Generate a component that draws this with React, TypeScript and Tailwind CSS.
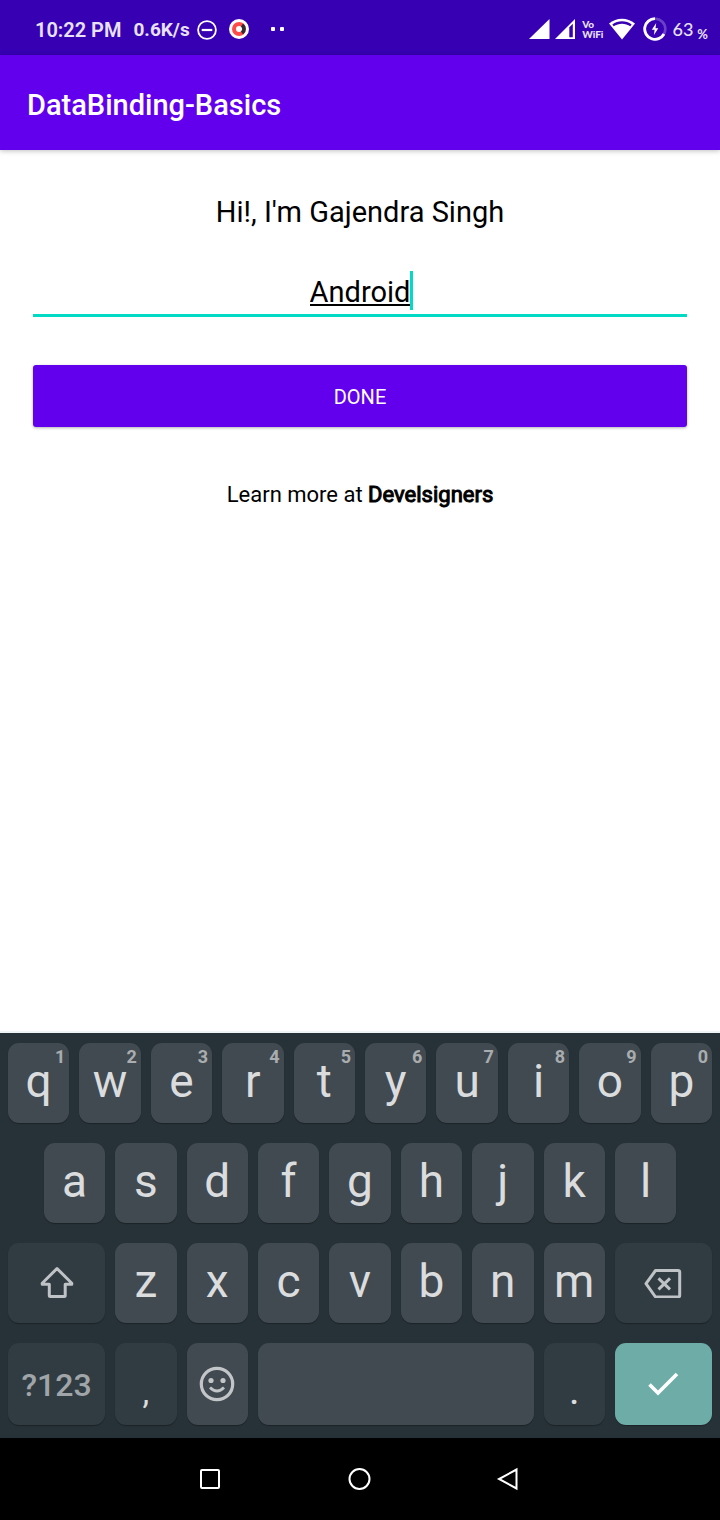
import { useState } from "react";
import type { ReactNode } from "react";

const sans = "font-['Roboto','Noto_Sans',sans-serif]";

function StatusBar() {
  return (
    <header className="flex h-[55px] items-center justify-between bg-[#3700b3] pt-1 pr-3 pl-[35px] text-[#e9e2f7]">
      <div className="flex items-center">
        <span className="text-[20px] leading-6 font-semibold">10:22 PM</span>
        <span className="ml-3 text-[19px] leading-6 font-bold">0.6K/s</span>
        <svg className="ml-[7px] size-5" viewBox="0 0 20 20" fill="none" stroke="#fff" strokeWidth="1.8">
          <circle cx="10" cy="10" r="8.9" />
          <path d="M4.7 10h10.6" strokeWidth="2.2" />
        </svg>
        <svg className="mb-[2px] ml-3 size-5" viewBox="0 0 20 20">
          <circle cx="10" cy="10" r="10" fill="#fff" />
          <circle cx="10" cy="10" r="5" fill="none" stroke="#ff4a4a" strokeWidth="4" />
          <path d="M13 6A5 5 0 0 1 13 14" fill="none" stroke="#2d2d35" strokeWidth="3.6" />
        </svg>
        <svg className="mb-[2px] ml-[21px] h-5 w-4" viewBox="0 0 16 20" fill="#fff">
          <rect x="1" y="8" width="4" height="4" rx="1" />
          <rect x="10" y="8" width="4" height="4" rx="1" />
        </svg>
      </div>
      <div className="flex items-center pb-[2px]">
        <svg className="h-5 w-[21px]" viewBox="0 0 21 20" fill="#fff">
          <path d="M0 20 20.500 0V20z" />
        </svg>
        <svg className="ml-[5px] h-5 w-[21px]" viewBox="0 0 21 20">
          <path d="M0 20 20 0V20z" fill="#fff" />
          <path d="M14.300 8.200 17.800 4.700V18.200H14.300z" fill="#3700b3" />
        </svg>
        <span className="ml-[6px] flex flex-col font-['Lato',sans-serif] text-[10px] leading-[10px] font-black">
          <span>Vo</span>
          <span>WiFi</span>
        </span>
        <svg className="ml-[6px] h-[22px] w-[26px]" viewBox="0 0 26 22">
          <path d="M0 5.500C7.500-1 18.500-1 26 5.500L13 21.500z" fill="#fff" />
          <path d="M3.300 6.600C9 2.200 17 2.200 22.700 6.600L21.300 8.300C16.500 4.900 9.500 4.900 4.700 8.300z" fill="#3700b3" />
        </svg>
        <svg className="ml-2 size-6" viewBox="0 0 24 24" fill="none">
          <circle cx="12" cy="12" r="10.300" stroke="#6a42c8" strokeWidth="2.600" />
          <path d="M12 1.700A10.300 10.300 0 1 0 21 17" stroke="#fff" strokeWidth="2.800" />
          <path d="M13.200 6 8.800 12.800H11.600L10.900 18 15.300 11.300H12.500z" fill="#fff" />
        </svg>
        <span className="ml-[5px] flex items-center font-['Lato',sans-serif]">
          <span className="text-[18px] leading-6 font-medium">63</span>
          <span className="ml-1 pt-[10px] text-[13px] leading-4 font-bold">%</span>
        </span>
      </div>
    </header>
  );
}

type KeyProps = {
  children?: ReactNode;
  label?: string;
  hint?: string;
  className?: string;
};

const letterTone = "bg-[#424a51]";
const actionTone = "bg-[#313c42]";

function Key({ children, label, hint, className = "" }: KeyProps) {
  return (
    <button
      type="button"
      aria-label={label}
      className={`relative flex items-center justify-center rounded-[11px] text-[#dadcde] shadow-[0_1px_1px_rgba(0,0,0,0.3)] ${className}`}
    >
      {children}
      {hint && (
        <span className="absolute top-1 right-1 text-[18px] leading-5 font-bold text-[#a9adb0]">{hint}</span>
      )}
    </button>
  );
}

function Letter({ char, hint, className = "" }: { char: string; hint?: string; className?: string }) {
  return (
    <Key hint={hint} className={`col-span-2 ${letterTone} ${className}`}>
      <span className="pb-1 text-[46px] leading-[54px]">{char}</span>
    </Key>
  );
}

function Keyboard() {
  const digits = "1234567890";
  return (
    <section aria-label="Keyboard" className="border-t-2 border-[#eef4f5] bg-[#273238]">
      <div className="grid grid-cols-20 grid-rows-[80px_80px_80px_82px] gap-x-[10px] gap-y-5 px-2 pt-[10px] pb-[13px]">
        {"qwertyuiop".split("").map((c, i) => (
          <Letter key={c} char={c} hint={digits[i]} />
        ))}
        {"asdfghjkl".split("").map((c, i) => (
          <Letter key={c} char={c} className={i === 0 ? "col-start-2" : ""} />
        ))}
        <Key label="Shift" className={`col-span-3 col-start-1 ${actionTone}`}>
          <svg className="h-9 w-9" viewBox="0 0 36 36" fill="none" stroke="#bfc3c6" strokeWidth="3" strokeLinejoin="round">
            <path d="M18 3.500 3.200 18.300V19.300H10.300V30.500Q10.300 31.500 11.300 31.500H25.200Q26.200 31.500 26.200 30.500V19.300H32.800V18.300z" />
          </svg>
        </Key>
        {"zxcvbnm".split("").map((c) => (
          <Letter key={c} char={c} />
        ))}
        <Key label="Backspace" className={`col-span-3 ${actionTone}`}>
          <svg className="h-[30px] w-[38px]" viewBox="0 0 38 30" fill="none" stroke="#bfc3c6" strokeWidth="3" strokeLinejoin="round">
            <path d="M11.500 2.500H34Q35.700 2.500 35.700 4.200V27.300Q35.700 29 34 29H11.500L2 15.700z" />
            <path d="M14.500 10.300 26 21.300M26 10.300 14.500 21.300" />
          </svg>
        </Key>
        <Key className={`col-span-3 ${actionTone}`}>
          <span className="pt-[2px] text-[32px] leading-10 font-medium text-[#a0a5a9]">?123</span>
        </Key>
        <Key className={`col-span-2 ${actionTone}`}>
          <span className="pt-4 text-[34px] leading-10">,</span>
        </Key>
        <Key label="Emoji" className={`col-span-2 ${letterTone}`}>
          <svg className="size-9" viewBox="0 0 36 36" fill="none" stroke="#c3c6c9" strokeWidth="3.200">
            <circle cx="18" cy="18" r="15.700" />
            <circle cx="12" cy="14.500" r="2.600" fill="#c3c6c9" stroke="none" />
            <circle cx="24" cy="14.500" r="2.600" fill="#c3c6c9" stroke="none" />
            <path d="M11 21.500Q18 28.500 25 21.500" strokeWidth="2.800" />
          </svg>
        </Key>
        <Key label="Space" className={`col-span-8 ${letterTone}`} />
        <Key className={`col-span-2 ${actionTone}`}>
          <span className="pt-4 text-[34px] leading-10 font-medium">.</span>
        </Key>
        <Key label="Enter" className="col-span-3 bg-[#6eaca8]">
          <svg className="h-6 w-8" viewBox="0 0 32 24" fill="none" stroke="#fff" strokeWidth="3.600">
            <path d="M2.500 12.500 11 21 30 2" />
          </svg>
        </Key>
      </div>
    </section>
  );
}

function NavigationBar() {
  return (
    <nav aria-label="System" className="flex h-[82px] items-center justify-center gap-[125px] bg-black pr-[2px]">
      <button type="button" aria-label="Recent apps">
        <svg className="size-6" viewBox="0 0 24 24" fill="none" stroke="#fff" strokeWidth="2">
          <rect x="3" y="3" width="18" height="18" rx="1" />
        </svg>
      </button>
      <button type="button" aria-label="Home">
        <svg className="size-6" viewBox="0 0 24 24" fill="none" stroke="#fff" strokeWidth="2">
          <circle cx="12.500" cy="12" r="10" />
        </svg>
      </button>
      <button type="button" aria-label="Back">
        <svg className="size-6" viewBox="0 0 24 24" fill="none" stroke="#fff" strokeWidth="2">
          <path d="M20.500 2.500V21.500L3 12z" />
        </svg>
      </button>
    </nav>
  );
}

export default function App() {
  const [name, setName] = useState("Android");
  return (
    <div className={`flex min-h-screen flex-col bg-white text-black ${sans}`}>
      <StatusBar />
      <div className="flex h-[95px] items-center bg-[#6200ee] px-[27px] pt-1 shadow-[0_1px_5px_rgba(0,0,0,0.25)]">
        <h1 className="text-[29px] leading-9 font-medium text-white">DataBinding-Basics</h1>
      </div>
      <main className="flex flex-1 flex-col px-[33px] pt-[42px]">
        <p className="text-center text-[29px] leading-10">Hi!, I'm Gajendra Singh</p>
        <label className="mt-[39px] flex justify-center border-b-[3px] border-[#03dac5] pb-1">
          <input
            type="text"
            aria-label="Name"
            value={name}
            onChange={(e) => setName(e.target.value)}
            className="h-[39px] border-x-[3px] border-l-transparent border-r-[#03dac5] pt-[2px] text-center text-[29px] leading-9 underline decoration-2 underline-offset-2 outline-none [field-sizing:content]"
          />
        </label>
        <button
          type="button"
          className="mt-12 h-[62px] rounded-[3px] bg-[#6200ee] pt-[2px] text-[20px] leading-6 text-white shadow-[0_1px_3px_rgba(0,0,0,0.3)]"
        >
          DONE
        </button>
        <p className="mt-[52px] text-center text-[22px] leading-8">
          Learn more at{" "}
          <a href="#develsigners" className="[-webkit-text-stroke:1px_black]">
            Develsigners
          </a>
        </p>
      </main>
      <Keyboard />
      <NavigationBar />
    </div>
  );
}
